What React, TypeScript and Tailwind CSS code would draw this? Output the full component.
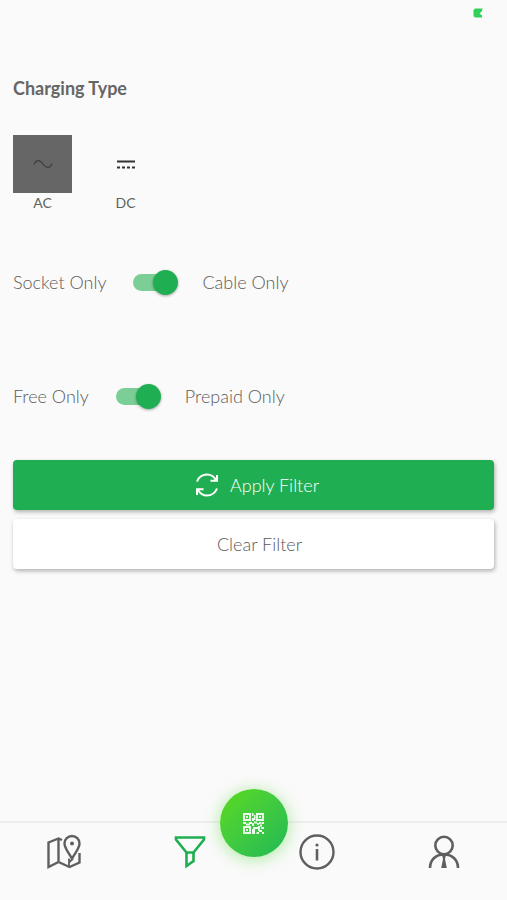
import { useState } from 'react';
import type { ReactNode } from 'react';

interface ChargingTypeProps {
  label: string;
  selected: boolean;
  onClick: () => void;
  children: ReactNode;
}

interface SwitchRowProps {
  id: string;
  left: string;
  right: string;
  checked: boolean;
  onChange: (checked: boolean) => void;
}

function ChargingType({ label, selected, onClick, children }: ChargingTypeProps) {
  return (
    <button
      type="button"
      aria-pressed={selected}
      onClick={onClick}
      className="flex flex-col items-center text-sm leading-5 font-normal text-[#5c645c]"
    >
      <span
        className={`flex items-center justify-center w-[59px] h-[58px] ${selected ? 'bg-[#666666]' : ''}`}
      >
        {children}
      </span>
      {label}
    </button>
  );
}

function SwitchRow({ id, left, right, checked, onChange }: SwitchRowProps) {
  return (
    <div className="flex items-center text-lg leading-7 text-[#5a5a5a]">
      <span>{left}</span>
      <input
        id={id}
        type="checkbox"
        role="switch"
        checked={checked}
        onChange={(e) => onChange(e.target.checked)}
        className="relative ml-[27px] mr-6 h-[25px] w-[45px] shrink-0 cursor-pointer appearance-none before:absolute before:left-0 before:top-1 before:h-[17px] before:w-[38px] before:rounded-full before:bg-[#bdbdbd] checked:before:bg-[#7bcf96] after:absolute after:left-0 after:top-0 after:size-[25px] after:rounded-full after:bg-white after:shadow-[0_1px_3px_rgba(0,0,0,0.35)] checked:after:left-5 checked:after:bg-[#1fae51]"
      />
      <label htmlFor={id}>{right}</label>
    </div>
  );
}

function SyncIcon() {
  return (
    <svg width="22" height="24" viewBox="0 0 22 24" fill="none" stroke="currentColor" strokeWidth="2">
      <path d="M1 8.500C3 3.500 6.500 1.500 11 1.500c4 0 7 2 9 5.500M14.500 7.700H21V2" />
      <path d="M21 15.500c-2 5-5.500 7-10 7-4 0-7-2-9-5.500M7.500 16.300H1V22" />
    </svg>
  );
}

function MapIcon() {
  return (
    <svg width="36" height="36" viewBox="0 0 36 36" fill="none" stroke="currentColor" strokeWidth="2.400">
      <path d="M17 6 13.500 4.500 3.500 8.500V33l10-5 11 5 10-4.500V19M13.500 4.500V28" />
      <path d="M27 24.500C23 18 19.500 14 19.500 9.500a7.500 7.500 0 0 1 15 0c0 4.500-3.500 8.500-7.500 15Z" />
      <path d="M24 24.500v8M24 28.500l4-4" strokeWidth="1.800" />
      <circle cx="27" cy="9.500" r="2" fill="currentColor" stroke="none" />
    </svg>
  );
}

function FilterIcon() {
  return (
    <svg width="32" height="34" viewBox="0 0 32 34" fill="none" stroke="currentColor" strokeWidth="2.600">
      <path d="M2 2.500h28v2L19.500 17.500h-7L2 4.500Z" />
      <path d="M12.500 17.500V31l7-5v-8.500" />
    </svg>
  );
}

function InfoIcon() {
  return (
    <svg width="36" height="36" viewBox="0 0 36 36" fill="none" stroke="currentColor">
      <circle cx="18" cy="18" r="16.500" strokeWidth="2.400" />
      <path d="M18 15v11.500" strokeWidth="2.600" />
      <circle cx="18" cy="11" r="1.600" fill="currentColor" stroke="none" />
    </svg>
  );
}

function ProfileIcon() {
  return (
    <svg width="32" height="34" viewBox="0 0 32 34" fill="none" stroke="currentColor" strokeWidth="2.600">
      <circle cx="16" cy="10.500" r="8.700" />
      <path d="M2 33c0-8 5.500-13.500 14-13.500S30 25 30 33" />
      <path d="M14 20h4l-1 4 1.800 9h-5.600l1.800-9Z" fill="currentColor" stroke="none" />
    </svg>
  );
}

function QrIcon() {
  return (
    <svg width="21" height="21" viewBox="0 0 21 21" fill="none" stroke="currentColor">
      <path d="M1 1h6v6H1ZM14 1h6v6h-6ZM1 14h6v6H1Z" strokeWidth="2" />
      <path
        d="M3 3h2v2H3zM16 3h2v2h-2zM3 16h2v2H3zM9 0h1.500v3H9zM11 2h1.500v5H11zM9 5h2v3H9zM0 9h3v2H0zM3 10.500h4v2H3zM6 9h3v2H6zM9 10h2v3H9zM11 8.500h3v2h-3zM14 10h2v2h-2zM16 9h2v2h-2zM18.500 9H21v2h-2.500zM17 11.500h2v2h-2zM10 14h5v2h-5zM9 16h3v5H9zM15 13h2v5h-2zM18 14h3v2h-3zM16 17h3v2h-3zM19 19h2v2h-2zM13.500 19H16v2h-2.500z"
        fill="currentColor"
        stroke="none"
      />
    </svg>
  );
}

export default function App() {
  const [types, setTypes] = useState({ ac: true, dc: false });
  const [cableOnly, setCableOnly] = useState(true);
  const [prepaidOnly, setPrepaidOnly] = useState(true);

  const clearFilter = () => {
    setTypes({ ac: false, dc: false });
    setCableOnly(false);
    setPrepaidOnly(false);
  };

  return (
    <div className="flex min-h-screen flex-col bg-[#fafafa] font-['Lato',sans-serif] font-light">
      {/* Status bar */}
      <div className="flex justify-end pr-6 pt-2">
        <svg width="10" height="10" viewBox="0 0 10 10">
          <path d="M2 .5h7.500L9 3 6.500 5.500 9 7.500V9.500H2L.5 8V2Z" fill="#2fd158" />
        </svg>
      </div>

      {/* Filters */}
      <main className="flex flex-col px-[13px] pt-14">
        <h1 className="text-lg leading-7 font-bold text-[#666666]">Charging Type</h1>

        <div className="mt-[33px] flex gap-6">
          <ChargingType label="AC" selected={types.ac} onClick={() => setTypes({ ...types, ac: !types.ac })}>
            <svg width="20" height="10" viewBox="0 0 20 10" fill="none" stroke="#3f3f3f" strokeWidth="1.200">
              <path d="M1 5.500C3 .5 7 .5 10 5s7 4.500 9-.5" />
            </svg>
          </ChargingType>
          <ChargingType label="DC" selected={types.dc} onClick={() => setTypes({ ...types, dc: !types.dc })}>
            <svg width="18" height="9" viewBox="0 0 18 9" fill="none" stroke="#333333" strokeWidth="2">
              <path d="M0 1.500h18" />
              <path d="M0 7.500h18" strokeDasharray="3 2" />
            </svg>
          </ChargingType>
        </div>

        <div className="mt-[55px] flex flex-col gap-[86px]">
          <SwitchRow
            id="cable-only"
            left="Socket Only"
            right="Cable Only"
            checked={cableOnly}
            onChange={setCableOnly}
          />
          <SwitchRow
            id="prepaid-only"
            left="Free Only"
            right="Prepaid Only"
            checked={prepaidOnly}
            onChange={setPrepaidOnly}
          />
        </div>

        <div className="mt-[50px] flex flex-col gap-[9px] text-lg leading-7">
          <button
            type="button"
            className="flex h-[50px] items-center justify-center gap-3 rounded-sm bg-[#1fae51] pl-2 text-white shadow-[1px_2px_4px_rgba(0,0,0,0.3)]"
          >
            <SyncIcon />
            Apply Filter
          </button>
          <button
            type="button"
            onClick={clearFilter}
            className="h-[50px] rounded-sm bg-white pl-3 text-[#5a5a5a] shadow-[1px_2px_4px_rgba(0,0,0,0.3)]"
          >
            Clear Filter
          </button>
        </div>
      </main>

      {/* Bottom navigation */}
      <nav className="relative mt-auto grid h-[79px] grid-cols-4 border-t-2 border-[#eeeeee] pb-5 text-[#5f5f5f]">
        <a href="#map" aria-label="Map" className="flex items-center justify-center">
          <MapIcon />
        </a>
        <a href="#filter" aria-label="Filter" className="flex items-center justify-center text-[#1fae51]">
          <FilterIcon />
        </a>
        <a href="#info" aria-label="Info" className="flex items-center justify-center">
          <InfoIcon />
        </a>
        <a href="#profile" aria-label="Profile" className="flex items-center justify-center">
          <ProfileIcon />
        </a>
        <button
          type="button"
          aria-label="Scan QR code"
          className="absolute left-1/2 -top-[34px] flex size-[68px] -translate-x-1/2 items-center justify-center rounded-full bg-linear-to-br from-[#5adb12] to-[#1db954] text-[#e9fbe9] shadow-[0_2px_16px_rgba(90,220,60,0.5)]"
        >
          <QrIcon />
        </button>
      </nav>
    </div>
  );
}
